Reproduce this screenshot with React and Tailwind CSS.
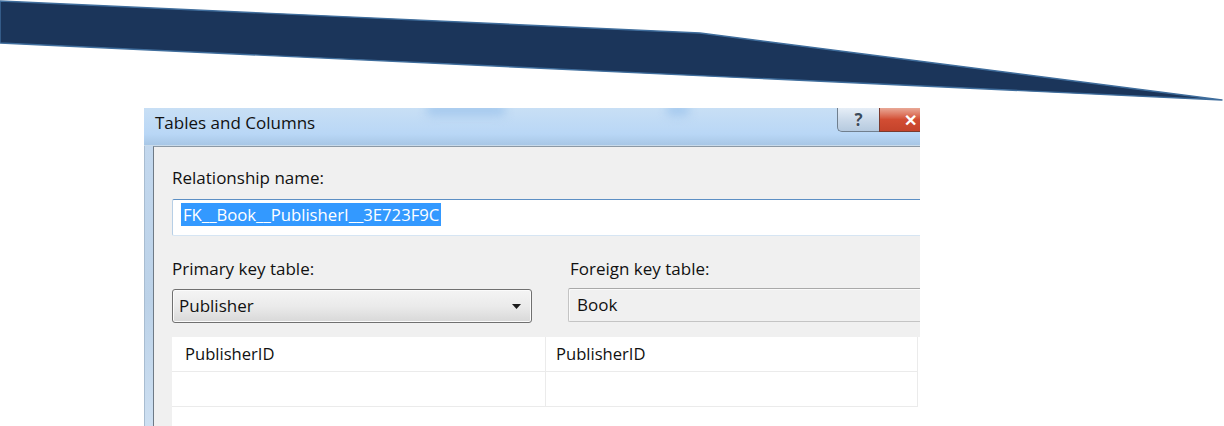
import { useState } from 'react'

const FONT = 'font-["Open_Sans","Noto_Sans",sans-serif]'

function Banner() {
  return (
    <svg width="1224" height="104" viewBox="0 0 1224 104" className="block">
      <polygon
        points="0,1 700,33 1222,100 0,43"
        fill="#1b355a"
        stroke="#3f6d9c"
        strokeWidth="1.4"
        strokeLinejoin="round"
      />
    </svg>
  )
}

function TitleBar() {
  return (
    <div className="relative h-[38px] shrink-0 overflow-hidden bg-linear-to-b from-[#c8dff5] via-[#b9d7f6] via-70% to-[#a8c7e6] border-b border-[#c9dbeb]">
      {/* soft glows from the desktop behind the glass */}
      <div className="absolute left-[282px] top-[-4px] h-[12px] w-[80px] rounded-full bg-[#a5c9ee] blur-[5px]" />
      <div className="absolute left-[522px] top-[-4px] h-[12px] w-[24px] rounded-full bg-[#a5c9ee] blur-[5px]" />
      <span className="absolute left-[11px] top-[4px] text-[17px] leading-[22px] text-[#111] whitespace-nowrap">
        Tables and Columns
      </span>
      {/* help / close buttons */}
      <div className="absolute right-0 top-0 flex h-[24px]">
        <div className="w-[42px] h-full rounded-bl-[5px] border-l border-b border-[#707f8e] bg-linear-to-b from-[#e6eef7] via-[#cbdaea] to-[#b6cadf] flex items-center justify-center">
          <span className="text-[17px] font-bold text-[#3b4b5c] leading-none [text-shadow:0_0_1px_#fff]">?</span>
        </div>
        <div className="w-[41px] h-full border-l border-b border-[#7a3a2e] bg-linear-to-b from-[#e8a897] via-[#d24d33] to-[#c4432b] flex items-center pl-[24px]">
          <span className="text-[16px] font-bold text-white leading-none">✕</span>
        </div>
      </div>
    </div>
  )
}

function Content() {
  const [name] = useState('FK__Book__PublisherI__3E723F9C')
  return (
    <div className="flex-1 border-t border-l border-t-[#8c99a5] border-l-[#6e7a86] bg-[#f0f0f0] pl-[18px] pt-[20px] text-[#111]">
      <div className="text-[17px] leading-[22px]">Relationship name:</div>
      <div className="mt-[10px] h-[37px] rounded-l-[2px] border border-r-0 border-[#b7cfe6] border-t-[#5c8fc4] border-b-[#d6e5f3] bg-white pl-[8px] pt-[3px]">
        <span className="inline-block h-[23px] bg-[#3399ff] px-[2px] text-[16.7px] leading-[23px] text-white whitespace-nowrap">
          {name}
        </span>
      </div>

      <div className="mt-[22px] flex">
        <div className="w-[360px]">
          <div className="text-[17px] leading-[22px]">Primary key table:</div>
          <div className="mt-[9px] h-[34px] rounded-[3px] border border-[#707070] bg-linear-to-b from-[#f4f4f4] via-[#ebebeb] via-50% to-[#d8d8d8] shadow-[inset_0_0_0_1px_#fbfbfb] flex items-center justify-between pl-[6px] pr-[10px]">
            <span className="text-[17px] leading-[22px]">Publisher</span>
            <svg width="9" height="5" viewBox="0 0 9 5">
              <polygon points="0,0 9,0 4.5,5" fill="#1a1a1a" />
            </svg>
          </div>
        </div>
        <div className="ml-[36px] flex-1">
          <div className="pl-[2px] text-[17px] leading-[22px]">Foreign key table:</div>
          <div className="mt-[8px] h-[34px] rounded-l-[2px] border border-r-0 border-[#c4c4c4] border-t-[#a9a9a9] bg-[#f0f0f0] shadow-[inset_1px_1px_0_#fafafa] flex items-center pl-[8px]">
            <span className="text-[17px] leading-[22px]">Book</span>
          </div>
        </div>
      </div>

      <div className="mt-[14px] h-[120px] bg-white">
        {[['PublisherID', 'PublisherID'], ['', '']].map((row, i) => (
          <div key={i} className="flex h-[35px]">
            <div className="w-[374px] border-r border-b border-[#ebebeb] pl-[13px] flex items-center text-[16.6px] leading-[22px]">
              {row[0]}
            </div>
            <div className="w-[372px] border-r border-b border-[#ebebeb] pl-[10px] flex items-center text-[16.6px] leading-[22px]">
              {row[1]}
            </div>
          </div>
        ))}
      </div>
    </div>
  )
}

export default function App() {
  return (
    <div className={`w-[1224px] h-[426px] overflow-hidden bg-white ${FONT}`}>
      <Banner />
      <div className="ml-[144px] mt-[4px] w-[776px] flex flex-col">
        <TitleBar />
        <div className="flex">
          {/* window frame */}
          <div className="w-[9px] shrink-0 bg-linear-to-b from-[#c3d8ee] via-[#bcd2e8] to-[#d2e3f4] border-l border-[#a9bdd1]" />
          <Content />
        </div>
      </div>
    </div>
  )
}
